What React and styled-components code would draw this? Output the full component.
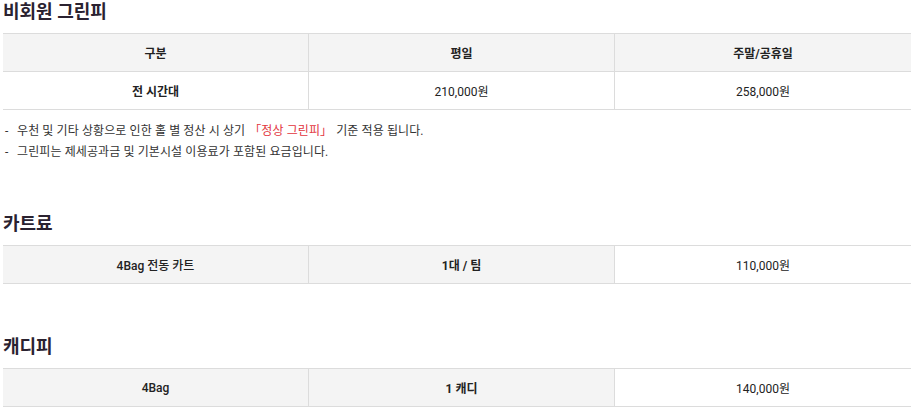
import React from 'react';
import styled, { createGlobalStyle } from 'styled-components';

const GlobalStyle = createGlobalStyle`
  html, body {
    margin: 0;
    padding: 0;
    background: #fff;
    overflow: hidden;
  }
  body {
    font-family: Roboto, "Noto Sans CJK KR", sans-serif;
    color: #222;
  }
`;

const Page = styled.div`
  padding: 0 0 0 3px;
  width: 908px;
`;

const Section = styled.section`
  margin-top: ${(p) => p.$top || 0}px;
`;

const Heading = styled.h3`
  margin: 0 0 9px 0;
  font-size: 18px;
  line-height: 24px;
  font-weight: 700;
  color: #2a2230;
`;

const Table = styled.div`
  display: grid;
  grid-template-columns: 305px 306px 1fr;
  border-top: 1px solid #dcdcdc;
`;

const Cell = styled.div`
  height: 37px;
  display: flex;
  align-items: center;
  justify-content: center;
  font-size: 12px;
  font-weight: ${(p) => p.$weight || 400};
  background: ${(p) => (p.$gray ? '#f4f4f4' : '#fff')};
  border-bottom: 1px solid #dcdcdc;
  border-left: ${(p) => (p.$first ? 'none' : '1px solid #dcdcdc')};
  color: #222;
`;

const Notes = styled.ul`
  list-style: none;
  margin: 11px 0 0 0;
  padding: 0;
`;

const Note = styled.li`
  display: flex;
  font-size: 12px;
  line-height: 21px;
  letter-spacing: 0.1px;
  color: #333;
  &::before {
    content: '-';
    width: 12px;
    padding-left: 2px;
  }
`;

const Red = styled.span`
  color: #e2353d;
  margin: 0 4px;
`;

const Row = ({ cells }) =>
  cells.map((c, i) => (
    <Cell key={i} $first={i === 0} $gray={c.gray} $weight={c.weight}>
      {c.text}
    </Cell>
  ));

export default function App() {
  return (
    <Page>
      <GlobalStyle />
      <Section>
        <Heading>비회원 그린피</Heading>
        <Table>
          <Row
            cells={[
              { text: '구분', gray: true, weight: 700 },
              { text: '평일', gray: true, weight: 700 },
              { text: '주말/공휴일', gray: true, weight: 700 },
            ]}
          />
          <Row
            cells={[
              { text: '전 시간대', weight: 700 },
              { text: '210,000원' },
              { text: '258,000원' },
            ]}
          />
        </Table>
        <Notes>
          <Note>
            <span>
              우천 및 기타 상황으로 인한 홀 별 정산 시 상기<Red>「정상 그린피」</Red>기준 적용 됩니다.
            </span>
          </Note>
          <Note>
            <span>그린피는 제세공과금 및 기본시설 이용료가 포함된 요금입니다.</span>
          </Note>
        </Notes>
      </Section>

      <Section $top={49}>
        <Heading>카트료</Heading>
        <Table>
          <Row
            cells={[
              { text: '4Bag 전동 카트', gray: true, weight: 500 },
              { text: '1대 / 팀', gray: true, weight: 700 },
              { text: '110,000원' },
            ]}
          />
        </Table>
      </Section>

      <Section $top={51}>
        <Heading>캐디피</Heading>
        <Table>
          <Row
            cells={[
              { text: '4Bag', gray: true, weight: 500 },
              { text: '1 캐디', gray: true, weight: 700 },
              { text: '140,000원' },
            ]}
          />
        </Table>
      </Section>
    </Page>
  );
}
